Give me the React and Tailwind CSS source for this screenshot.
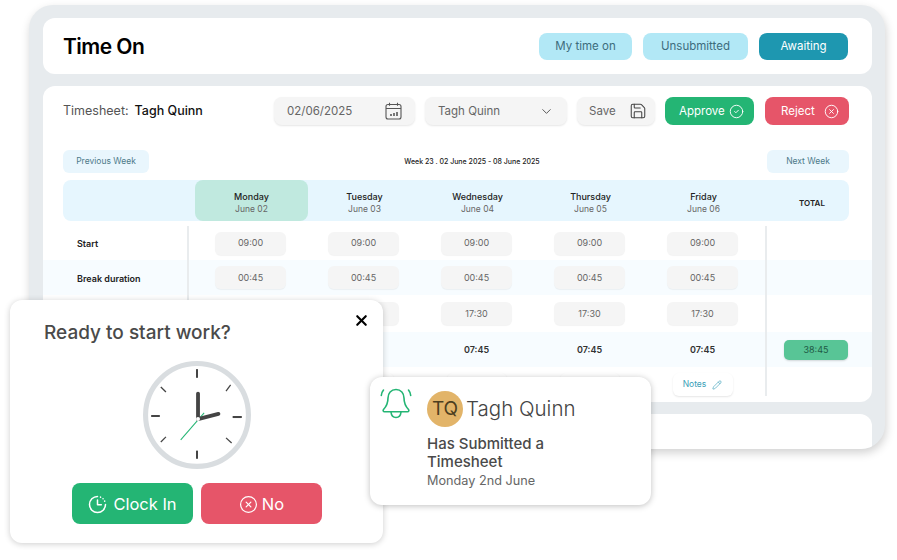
import { Save, CircleCheck, CircleX, ChevronDown, Pencil, X } from 'lucide-react';

const days = [
  { name: 'Monday', date: 'June 02', active: true },
  { name: 'Tuesday', date: 'June 03' },
  { name: 'Wednesday', date: 'June 04' },
  { name: 'Thursday', date: 'June 05' },
  { name: 'Friday', date: 'June 06' },
];

function Row({ label, shaded, className, total, children }) {
  return (
    <div className={`flex -ml-5 -mr-[23px] pl-5 pr-[23px] ${shaded ? 'bg-[#f7fcff]' : ''} ${className}`}>
      <div className="w-[126px] shrink-0 border-r-2 border-[#e9ecee] pl-3.5 pt-0.5 flex items-center text-[9px] font-semibold text-[#222]">
        {label}
      </div>
      <div className="flex ml-[5px]">{days.map((d) => (
        <div key={d.name} className="w-[113px] flex items-center justify-center">{children}</div>
      ))}</div>
      <div className="ml-[6px] flex-1 border-l-2 border-[#e9ecee] flex items-center justify-end">{total}</div>
    </div>
  );
}

function TimeChip({ children }) {
  return (
    <div className="w-[71px] h-[23px] rounded-md bg-[#f5f5f5] shadow-[0_1px_1px_rgba(0,0,0,0.05)] flex items-center justify-center text-[9px] text-[#666]">
      {children}
    </div>
  );
}

function CalendarIcon() {
  return (
    <svg width="17" height="18" viewBox="0 0 17 18" fill="none" stroke="#555" strokeWidth="1.1">
      <rect x="1" y="2.5" width="15" height="14.5" rx="2" />
      <path d="M1 6.5h15M4.5 .8v3M12.5 .8v3" />
      <path d="M5 14v-2h2v2zM8 14v-3h2v3zM11 14v-4h2v4z" fill="#777" stroke="none" />
    </svg>
  );
}

function BellIcon() {
  return (
    <svg width="32" height="34" viewBox="0 0 32 34" fill="none" stroke="#24b574" strokeWidth="1.6" strokeLinecap="round" strokeLinejoin="round">
      <path d="M16 2.500c-5 0-8 3.800-8 8.500 0 5-1.200 8-4.500 11.500-.8 1-.3 2.300 1 2.300h23c1.300 0 1.800-1.300 1-2.300C25.200 19 24 16 24 11c0-4.700-3-8.500-8-8.500z" />
      <path d="M11 25c.3 3.500 2.300 5.500 5 5.500s4.700-2 5-5.500" />
      <path d="M3.500 3c-1.300 1.500-2 3.200-2.200 5.500M28.500 3c1.300 1.500 2 3.200 2.200 5.500" />
    </svg>
  );
}

function ClockInIcon() {
  return (
    <svg width="19" height="19" viewBox="0 0 19 19" fill="none" stroke="white" strokeWidth="1.5" strokeLinecap="round" strokeLinejoin="round">
      <path d="M9.500 1.500a8 8 0 1 0 8 8" />
      <path d="M9.500 5v4.800h3.800" />
      <path d="M12.500 2.100l.1.1M15 3.700l.1.1M16.600 6l.1.1" />
    </svg>
  );
}

function ClockFace() {
  const ticks = [
    [108, 16, 108, 33, 4],
    [108, 176, 108, 192, 4],
    [18, 108, 35, 108, 4],
    [178, 110, 196, 110, 4],
    [37, 51, 47, 61, 2.5],
    [165, 59, 174, 47, 2.5],
    [37, 159, 47, 149, 2.5],
    [165, 151, 176, 161, 2.5],
  ];
  return (
    <svg width="110" height="110" viewBox="0 0 216 216">
      <circle cx="108" cy="106" r="101" fill="white" stroke="#d9dde0" strokeWidth="10" />
      {ticks.map(([x1, y1, x2, y2, w], i) => (
        <line key={i} x1={x1} y1={y1} x2={x2} y2={y2} stroke="#444" strokeWidth={w} />
      ))}
      <line x1="76" y1="155" x2="122" y2="102" stroke="#24b574" strokeWidth="2" />
      <path d="M110 114V64" stroke="#444" strokeWidth="7.500" strokeLinecap="round" />
      <path d="M110 114l40-10" stroke="#444" strokeWidth="7.500" strokeLinecap="round" />
      <circle cx="110" cy="114" r="4" fill="white" />
    </svg>
  );
}

export default function App() {
  return (
    <div className="relative h-[560px] w-[897px] overflow-hidden bg-white font-[Inter,sans-serif]">
      <div className="ml-[29px] mt-[5px] w-[856px] h-[444px] rounded-[24px] bg-[#e7ebee] pl-[14px] pr-[13px] pt-[13px] overflow-hidden shadow-[1px_4px_10px_rgba(0,0,0,0.18)] flex flex-col gap-3">
        {/* Header */}
        <div className="h-14 shrink-0 rounded-xl bg-white flex items-center pl-5 pr-6">
          <h1 className="pt-0.5 text-[21px] font-semibold text-black tracking-tight">Time On</h1>
          <div className="ml-auto flex gap-[11px] text-[11.5px]">
            <div className="w-[93px] h-[27px] pt-0.5 rounded-lg bg-[#b2e8f6] text-[#3d6c7d] flex items-center justify-center">My time on</div>
            <div className="w-[105px] h-[27px] pt-0.5 rounded-lg bg-[#b2e8f6] text-[#3d6c7d] flex items-center justify-center">Unsubmitted</div>
            <div className="w-[89px] h-[27px] pt-0.5 rounded-lg bg-[#1e97b0] text-white flex items-center justify-center">Awaiting</div>
          </div>
        </div>

        {/* Timesheet */}
        <div className="h-[316px] shrink-0 rounded-xl bg-white pl-5 pr-[23px] pt-[11px]">
          <div className="flex items-center h-7">
            <span className="pt-px text-[12.5px] text-[#555]">Timesheet:</span>
            <span className="pt-px ml-1.5 text-[12.500px] font-medium text-[#111]">Tagh Quinn</span>
            <div className="ml-auto flex gap-2.5 text-[11.500px] text-[#666]">
              <div className="w-[141px] h-7 rounded-lg bg-[#f5f5f5] shadow-[0_1px_2px_rgba(0,0,0,0.1)] flex items-center justify-between pl-[13px] pr-[13px]">
                <span className="pt-px">02/06/2025</span>
                <CalendarIcon />
              </div>
              <div className="w-[142px] h-7 rounded-lg bg-[#f5f5f5] shadow-[0_1px_2px_rgba(0,0,0,0.1)] flex items-center justify-between pl-[13px] pr-[13px]">
                <span className="pt-px">Tagh Quinn</span>
                <ChevronDown size={15} strokeWidth={1.4} color="#444" />
              </div>
              <div className="w-[78px] h-7 rounded-lg bg-[#f5f5f5] shadow-[0_1px_2px_rgba(0,0,0,0.1)] flex items-center justify-between pl-3 pr-2">
                <span className="pt-px">Save</span>
                <Save size={18} strokeWidth={1.4} color="#444" />
              </div>
              <div className="w-[89px] h-7 rounded-lg bg-[#24b574] text-white flex items-center justify-between pl-3.5 pr-2.5">
                <span className="pt-px">Approve</span>
                <CircleCheck size={15} strokeWidth={1.5} />
              </div>
              <div className="ml-px w-[84px] h-7 rounded-lg bg-[#e65569] text-white flex items-center justify-between pl-4 pr-2.5">
                <span className="pt-px">Reject</span>
                <CircleX size={15} strokeWidth={1.5} />
              </div>
            </div>
          </div>

          <div className="flex items-center justify-between mt-[25px] h-[23px]">
            <div className="w-[86px] h-[23px] rounded-md bg-[#e9f6fd] text-[#4d7a8a] text-[8.500px] flex items-center justify-center">Previous Week</div>
            <div className="text-[7px] font-medium text-[#222] pl-7 pt-0.5">Week 23 . 02 June 2025 - 08 June 2025</div>
            <div className="w-[82px] h-[23px] rounded-md bg-[#e9f6fd] text-[#4d7a8a] text-[8.500px] flex items-center justify-center">Next Week</div>
          </div>

          {/* Day headers */}
          <div className="flex mt-[7px] h-[41px] rounded-lg bg-[#e6f6fe]">
            <div className="w-[132px] shrink-0" />
            {days.map((d) => (
              <div key={d.name} className={`w-[113px] pt-[5px] rounded-lg flex flex-col items-center justify-center ${d.active ? 'bg-[#c0e9df]' : ''}`}>
                <span className="text-[9px] font-medium text-[#222] leading-3">{d.name}</span>
                <span className="text-[8.500px] text-[#666] leading-3">{d.date}</span>
              </div>
            ))}
            <div className="flex-1 flex items-center justify-center pl-[15px] pt-[5px] text-[8px] font-semibold text-[#222]">TOTAL</div>
          </div>

          {/* Rows */}
          <div className="mt-[5px]">
            <Row label="Start" className="h-[34px]"><TimeChip>09:00</TimeChip></Row>
            <Row label="Break duration" shaded className="h-[35px]"><TimeChip>00:45</TimeChip></Row>
            <Row label="Finish" className="h-[37px]"><TimeChip>17:30</TimeChip></Row>
            <Row
              label="Total"
              shaded
              className="h-[35px]"
              total={<div className="mr-px w-16 h-5 rounded-[5px] bg-[#58c596] shadow-[0_1px_2px_rgba(0,0,0,0.15)] text-[#1f5a45] text-[9px] flex items-center justify-center">38:45</div>}
            >
              <span className="text-[9px] font-semibold text-[#333]">07:45</span>
            </Row>
            <Row label="Notes" className="h-[29px]">
              <div className="mt-[6px] w-[60px] h-[23px] rounded-md bg-white shadow-[0_1px_2px_rgba(0,0,0,0.1)] flex items-center justify-center gap-1.5 text-[8.500px] text-[#3a9fb8]">
                Notes
                <Pencil size={10} strokeWidth={1.5} />
              </div>
            </Row>
          </div>
        </div>

        <div className="h-14 shrink-0 rounded-xl bg-white" />
      </div>

      {/* Clock in popup */}
      <div className="absolute left-[10px] top-[300px] w-[373px] h-[243px] rounded-xl bg-white shadow-[0_1px_6px_rgba(0,0,0,0.2)] flex flex-col">
        <X size={17} strokeWidth={3} className="absolute right-[13px] top-[12px] text-black" />
        <div className="ml-[34px] mt-[21px] text-[19px] leading-6 font-medium text-[#4a4a4a]">Ready to start work?</div>
        <div className="ml-[132px] mt-[16px] h-[110px]"><ClockFace /></div>
        <div className="mt-[12px] ml-[62px] flex gap-2">
          <div className="w-[121px] h-[41px] pt-px rounded-lg bg-[#24b574] text-white text-[16.500px] flex items-center justify-center gap-1.5">
            <ClockInIcon />
            Clock In
          </div>
          <div className="w-[121px] h-[41px] pt-px rounded-lg bg-[#e65569] text-white text-[16.500px] flex items-center justify-center gap-1">
            <CircleX size={19} strokeWidth={1.5} />
            No
          </div>
        </div>
      </div>

      {/* Notification */}
      <div className="absolute left-[370px] top-[377px] w-[281px] h-[128px] rounded-xl bg-white shadow-[0_1px_6px_rgba(0,0,0,0.25)] flex pt-[10px] pl-[10px]">
        <BellIcon />
        <div className="ml-[15px] pt-[4px]">
          <div className="flex items-center gap-[3px]">
            <div className="w-9 h-9 rounded-full bg-[#e2b469] text-[#4d3f1f] text-[19px] flex items-center justify-center">TQ</div>
            <span className="pt-px text-[20.500px] font-light text-[#444]">Tagh Quinn</span>
          </div>
          <div className="mt-2 w-[150px] text-[15px] leading-[18px] font-medium text-[#4a4a4a]">Has Submitted a Timesheet</div>
          <div className="mt-[2px] text-[12.700px] leading-4 text-[#666]">Monday 2nd June</div>
        </div>
      </div>
    </div>
  );
}
